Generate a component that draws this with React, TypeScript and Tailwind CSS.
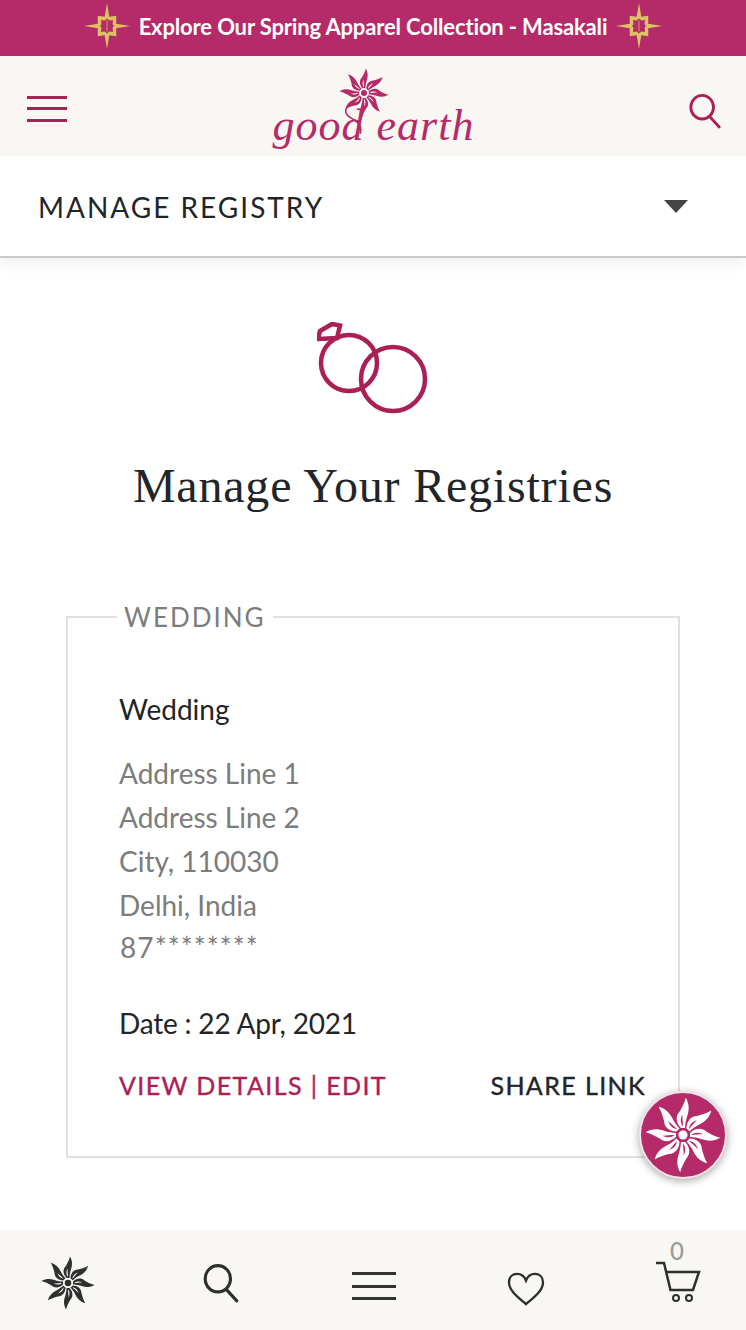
import type { ReactNode } from 'react';

const Flower = ({ petal, core, className, children }: { petal: string; core: string; className?: string; children?: ReactNode }) => {
  const angles = [0, 45, 90, 135, 180, 225, 270, 315];
  return (
    <svg viewBox="-54 -54 108 108" className={`overflow-visible ${className}`}>
      {children}
      {angles.map((a) => (
        <g key={a} transform={`rotate(${a})`}>
          <path
            d="M-3 -10C-10 -17-11 -27-5 -33C-2 -38 2 -45 4 -53C9 -44 9 -36 6 -27C4 -21 3 -15 3 -10Z"
            fill={petal}
          />
          <path d="M0 -12C-4 -17-4 -23-1 -29C-1 -22 0 -17 0 -12Z" fill={core} />
        </g>
      ))}
      <circle r="10" fill={core} />
      <circle r="6.5" fill={petal} />
    </svg>
  );
};

const Star = ({ className }: { className?: string }) => (
  <svg viewBox="-26 -26 52 52" className={`blur-[0.7px] ${className}`}>
    <path
      d="M0 -25L2.5 -10L10 -11L10 -2.5L25 0L10 2.5L10 11L2.5 10L0 25L-2.5 10L-10 11L-10 2.5L-25 0L-10 -2.5L-10 -11L-2.5 -10Z"
      fill="#dcc262"
    />
    <path d="M0 -8L2.5 -6L6.5 -6.5L6 -2L7.5 0L6 2L6.5 6.5L2.5 6L0 8L-2.5 6L-6.5 6.5L-6 2L-7.5 0L-6 -2L-6.5 -6.5L-2.5 -6Z" fill="#b52a68" />
    <path d="M0 -6V6" stroke="#dcc262" strokeWidth="0.8" />
  </svg>
);

const Rings = () => (
  <svg viewBox="0 0 112 94" className="w-[112px] h-[94px]" fill="none" stroke="#ab1f57" strokeWidth="4.5">
    <circle cx="32" cy="41" r="28" />
    <circle cx="76" cy="57" r="32" />
    <path d="M1 17L3 9L15 2L23 3.5L20 16Z" />
  </svg>
);

const Search = ({ color, className }: { color: string; className?: string }) => (
  <svg viewBox="0 0 36 38" className={className} fill="none" stroke={color} strokeWidth="3">
    <ellipse cx="15" cy="15" rx="12" ry="12.5" />
    <path d="M23 25L33 36" strokeLinecap="round" />
  </svg>
);

const Lines = ({ color, className }: { color: string; className?: string }) => (
  <div className={`flex flex-col justify-between ${className}`}>
    <div className="h-[3px]" style={{ backgroundColor: color }} />
    <div className="h-[3px]" style={{ backgroundColor: color }} />
    <div className="h-[3px]" style={{ backgroundColor: color }} />
  </div>
);

export default function App() {
  return (
    <div className="flex flex-col h-[1330px] w-[746px] overflow-hidden bg-white font-['Lato',sans-serif] text-[#212529]">
      {/* promo strip */}
      <div className="h-[56px] bg-[#b52a68] flex items-center justify-center shrink-0">
        <Star className="w-[48px] h-[48px] mr-[8px] -mt-[4px]" />
        <span className="text-white text-[22px] font-bold tracking-[-0.15px] leading-none -mt-[3px]">
          Explore Our Spring Apparel Collection - Masakali
        </span>
        <Star className="w-[48px] h-[48px] ml-[8px] -mt-[4px]" />
      </div>

      {/* header */}
      <header className="h-[100px] bg-[#f8f7f3] flex items-center justify-between pl-[27px] pr-[24px] shrink-0">
        <Lines color="#ab1f57" className="w-[40px] h-[26px] mt-[5px]" />
        <div className="flex flex-col items-center w-[210px] -ml-[8px]">
          <Flower petal="#b52a68" core="#f8f7f3" className="w-[50px] h-[50px] -ml-[20px]">
            <path d="M-20 20C-42 28-48 44-25 56C-12 62-4 72-8 88" fill="none" stroke="#b52a68" strokeWidth="3.4" />
          </Flower>
          <span className="font-['Liberation_Serif',serif] italic text-[#b52a68] text-[44px] leading-[36px] tracking-[1px] -mt-[10px] whitespace-nowrap">
            good earth
          </span>
        </div>
        <Search color="#ab1f57" className="w-[34px] h-[36px] mt-[9px]" />
      </header>

      {/* registry dropdown */}
      <div className="h-[102px] flex items-center justify-between pl-[38px] pr-[58px] shrink-0 border-b-2 border-[#c9c9c9] shadow-[0_6px_14px_rgba(0,0,0,0.06)]">
        <span className="text-[28px] tracking-[2px] text-[#212529] mt-[2px]">MANAGE REGISTRY</span>
        <div className="w-0 h-0 border-x-[12px] border-x-transparent border-t-[13px] border-t-[#444444]" />
      </div>

      <main className="relative flex-1 flex flex-col items-center pt-[64px]">
        <Rings />
        <h1 className="font-['Liberation_Serif',serif] text-[48px] tracking-[0.8px] leading-[56px] mt-[42px] text-[#212529] whitespace-nowrap">
          Manage Your Registries
        </h1>

        <fieldset className="w-[614px] h-[556px] mt-[88px] border-2 border-[#e1e1e1] pl-[51px] pr-[32px] pt-[70px]">
          <legend className="ml-[-2px] px-[7px] text-[26px] leading-[30px] tracking-[2px] text-[#7c7c7c]">WEDDING</legend>
          <p className="text-[28px] leading-[44px] text-[#212529] -mt-[15px]">Wedding</p>
          <div className="mt-[20px] text-[28px] leading-[44px] text-[#7c7c7c]">
            <p>Address Line 1</p>
            <p>Address Line 2</p>
            <p>City, 110030</p>
            <p>Delhi, India</p>
            <p className="tracking-[1.1px] leading-[40px] ml-[1px]">87********</p>
          </div>
          <p className="mt-[34px] text-[28px] leading-[44px] tracking-[-0.2px] text-[#212529]">Date : 22 Apr, 2021</p>
          <div className="flex justify-between mt-[18px] text-[25px] leading-[44px] tracking-[1.4px] [-webkit-text-stroke:0.4px]">
            <span className="text-[#ab1f57]">VIEW DETAILS | EDIT</span>
            <span className="text-[#212529]">SHARE LINK</span>
          </div>
        </fieldset>

        {/* floating chat button */}
        <div className="absolute left-[639px] top-[833px] w-[88px] h-[88px] rounded-full bg-[#b52a68] border-2 border-[#f3e3ea] shadow-[0_2px_8px_rgba(0,0,0,0.35)] flex items-center justify-center">
          <Flower petal="#ffffff" core="#b52a68" className="w-[76px] h-[76px]" />
        </div>
      </main>

      {/* bottom nav */}
      <nav className="h-[100px] bg-[#f8f7f3] flex items-center pl-[41px] shrink-0">
        <Flower petal="#2f2f2f" core="#f8f7f3" className="w-[54px] h-[54px] mt-[6px]" />
        <Search color="#2f2f2f" className="w-[40px] h-[40px] mt-[5px] ml-[106px]" />
        <Lines color="#333333" className="w-[44px] h-[28px] mt-[12px] ml-[111px]" />
        <svg viewBox="0 0 40 36" className="w-[38px] h-[34px] mt-[18px] ml-[111px]" fill="none" stroke="#2f2f2f" strokeWidth="2.5">
          <path d="M20 34C12 27 2 20 2 11C2 5 6 2 10.5 2C15 2 18 4 20 9C22 4 25 2 29.5 2C34 2 38 5 38 11C38 20 28 27 20 34Z" />
        </svg>
        <div className="relative w-[46px] h-[60px] flex items-end -mt-[14px] ml-[111px]">
          <span className="absolute left-[14px] -top-[4px] text-[24px] font-medium leading-none text-[#9b9b9b]">0</span>
          <svg viewBox="0 0 46 42" className="w-[46px] h-[42px]" fill="none" stroke="#2f2f2f" strokeWidth="2.5">
            <path d="M0 2H8L14.5 29H37L43 11H10" />
            <circle cx="20" cy="37" r="3" strokeWidth="2" />
            <circle cx="33" cy="37" r="3" strokeWidth="2" />
          </svg>
        </div>
      </nav>
    </div>
  );
}
